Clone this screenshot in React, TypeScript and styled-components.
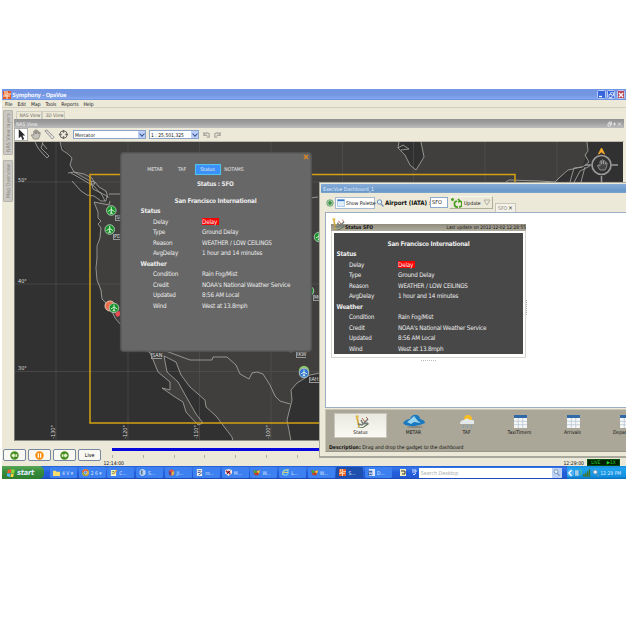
import React from "react";
import styled, { createGlobalStyle, css } from "styled-components";

const Global = createGlobalStyle`
  *{box-sizing:border-box}
  body{margin:0;background:#fff;overflow:hidden}
`;
const Desktop = styled.main`
  width:624px;height:390px;margin:89px 0 0 2px;position:relative;overflow:hidden;
  display:grid;grid-template-columns:624px;grid-template-rows:11px 8px 333px 25px 13px;background:#ece9d8;
  font-family:"DejaVu Sans Condensed","DejaVu Sans",sans-serif;font-size:5.3px;line-height:8px;color:#111;white-space:nowrap;
`;
const TitleBar = styled.header`
  display:flex;align-items:center;padding:0 1px 0 1px;gap:1.2px;
  background:linear-gradient(#7197e8,#7595df 55%,#83a8f2 90%,#5a7fd0);color:#eef3ff;
  font:bold 5.8px/10px "DejaVu Sans Condensed","DejaVu Sans",sans-serif;letter-spacing:-.28px;
`;
const Grow = styled.span`flex:1;`;
const WinButton = styled.span<{ $close?: boolean }>`
  width:8.5px;height:9px;border:1px solid #b9caf5;border-radius:1.5px;display:grid;place-items:center;flex:none;
  background:${(p) => (p.$close ? "#bf4858" : "#3566dc")};
  svg{width:6px;height:6px}
`;
const MenuBar = styled.nav`
  display:flex;gap:4.9px;padding-left:3px;font-size:5px;line-height:8px;border-bottom:1px solid #d2cfc2;
`;
const Workspace = styled.div`display:grid;grid-template-columns:12px 610px 2px;`;
const Rail = styled.aside`padding:2px 0 0 1px;display:flex;flex-direction:column;gap:5px;`;
const RailTab = styled.div<{ $h: number }>`
  height:${(p) => p.$h}px;width:10px;border:1px solid #b6b3aa;border-radius:1px;background:#cbc9c4;
  writing-mode:vertical-rl;transform:rotate(180deg);display:flex;align-items:center;justify-content:center;line-height:8px;color:#88867d;font-size:5.3px;
`;
const MapPane = styled.section`display:grid;grid-template-rows:11px 9px 14px 299px;min-width:0;`;
const TabStrip = styled.div`display:flex;align-items:flex-end;padding-left:2px;`;
const ViewTab = styled.span<{ $w: number }>`
  width:${(p) => p.$w}px;height:8px;border:1px solid #cfccc0;border-width:1px 1px 0 1px;padding-left:2.5px;font-size:4.9px;color:#6d6b62;line-height:7px;
`;
const PaneBar = styled.div`
  display:flex;align-items:center;background:linear-gradient(#929292,#9c9c9c 40%,#bdbdbd);color:#f4f4f4;font-size:5px;padding:0 2px;
`;
const ToolRow = styled.div`display:flex;align-items:center;border-bottom:1px solid #bcb9ac;`;
const Tool = styled.span<{ $on?: boolean }>`
  width:14px;height:13px;display:grid;place-items:center;
  ${(p) => p.$on && css`background:#fff;border:1px solid #b2b2ac;`}
  svg{width:11px;height:11px}
`;
const Select = styled.div<{ $w: number }>`
  width:${(p) => p.$w}px;height:9px;border:1px solid #89a4c7;background:#fff;display:flex;justify-content:space-between;
  padding-left:1px;line-height:8px;font-size:5px;margin-left:3px;
`;
const Arrow = styled.i`
  width:7px;height:7px;background:#bccffa;display:grid;place-items:center;
  &:after{content:"";width:3px;height:3px;border:solid #3c5590;border-width:0 1px 1px 0;transform:translateY(-1px) rotate(45deg)}
`;
const Undo = styled.span`display:flex;gap:4px;margin-left:4px;svg{width:7px;height:7px}`;
const MapCanvas = styled.div`
  position:relative;overflow:hidden;background:#403f3d;border-left:1px solid #777;border-bottom:1px solid #8b8b87;margin-right:1px;
`;
const MapDrawing = styled.svg`display:block;width:608px;height:299px;`;
const MapText = styled.span<{ $x: number; $y: number; $v?: boolean; $box?: boolean }>`
  position:absolute;left:${(p) => p.$x - 15}px;top:${(p) => p.$y - 142}px;color:#ddd;font-size:5.5px;line-height:6px;
  ${(p) => p.$v && css`writing-mode:vertical-rl;transform:rotate(180deg);`}
  ${(p) => p.$box && css`border:1px solid #999;border-width:0 0 1px 1px;line-height:5px;`}
`;
const Popup = styled.section`
  position:absolute;left:119px;top:64px;width:190px;height:198px;background:#676767;border:1px solid #5e5e5e;border-radius:3px;
  box-shadow:0 0 1px 1px #555;color:#e8e8e8;padding-left:18.5px;
`;
const CloseCross = styled.span`position:absolute;right:1.5px;top:0;svg{width:6px;height:6px;display:block}`;
const PopupTabs = styled.div`display:flex;align-items:center;height:11px;margin-top:9.5px;font-size:5.1px;`;
const PopupTab = styled.span<{ $w: number; $on?: boolean }>`
  width:${(p) => p.$w}px;height:11px;line-height:9px;text-align:center;border:1px solid transparent;
  ${(p) => p.$on && css`background:#3b91f8;border-color:#50c2ec;`}
`;
const PopupHeading = styled.h2`
  margin:4px 20px 0 0;font:bold 6.3px/9px "DejaVu Sans Condensed","DejaVu Sans",sans-serif;text-align:center;height:18.5px;letter-spacing:-.25px;
`;
const Report = styled.div`font-size:6.3px;line-height:10.5px;color:#ececec;letter-spacing:-.21px;`;
const Airport = styled.h3<{ $w: number }>`
  margin:0;width:${(p) => p.$w}px;text-align:center;font-size:6.4px;line-height:9px;height:9px;letter-spacing:-.26px;
`;
const Group = styled.h4`margin:0;font-size:6.4px;line-height:10.5px;height:10.5px;`;
const Field = styled.div`display:grid;grid-template-columns:49px auto;padding-left:12.5px;height:10.5px;justify-content:start;`;
const Alert = styled.mark`
  background:#fb0000;color:#ffe9e9;display:inline-block;width:17px;height:7px;line-height:7px;vertical-align:middle;margin-top:-1px;
`;
const Playback = styled.footer`display:flex;padding:8px 0 0 1px;gap:1.6px;`;
const PlayButton = styled.button`
  width:23.4px;height:12px;padding:0;border:1px solid #7588a0;border-radius:2px;background:#f9f8f2;display:grid;place-items:center;
  font:5.3px/8px "DejaVu Sans Condensed","DejaVu Sans",sans-serif;svg{width:9px;height:9px}
`;
const Timeline = styled.div`flex:1;margin-left:9.5px;margin-top:-8px;padding-top:7px;`;
const Progress = styled.div`height:2.5px;background:#0808dd;`;
const Ticks = styled.div`
  height:3px;margin-top:4px;background:repeating-linear-gradient(90deg,#b0aea5 0 1px,transparent 1px 30.8px);
`;
const TimeRow = styled.div`display:flex;justify-content:flex-end;font-size:5.1px;line-height:6px;margin:1.5px 6px 0 -9px;align-items:center;gap:3px;`;
const LiveBadge = styled.span`
  width:33px;height:7px;background:#021f05;border:1px solid #064d0a;color:#1ed92c;font-size:4.8px;line-height:5px;display:flex;justify-content:space-around;
`;
const Dashboard = styled.section`
  position:absolute;left:317px;top:93px;width:310px;height:276px;background:#ece9d8;border:1px solid #aaa99e;border-width:1px 0 2px 1px;
  display:grid;grid-template-columns:308px;grid-template-rows:10px 19px 196px 44px;padding-left:1px;
`;
const DashTitle = styled.header`
  background:linear-gradient(#88acd7,#6698ca 80%,#81a6cb);color:#e5efff;line-height:10px;padding-left:2px;font-size:5.1px;margin-top:1px;
`;
const DashTools = styled.div`
  display:flex;align-items:center;padding-left:5px;gap:1px;font-size:5.1px;
  >svg{width:8px;height:8px;flex:none}
`;
const DashButton = styled.span<{ $w: number; $plain?: boolean }>`
  width:${(p) => p.$w}px;flex:none;height:12px;border:1px solid #a8bad1;background:#fff;display:flex;align-items:center;gap:1.5px;padding-left:.5px;
  svg{width:8px;height:8px;flex:none}
  ${(p) => p.$plain && css`background:#ece9d8;border-color:#f7f6ee #b1ae9f #b1ae9f #f2f1e8;height:13px;gap:2.5px;svg:first-child{width:11px;height:10px}`}
`;
const AirportLabel = styled.label`font-size:6.2px;font-weight:bold;width:44px;flex:none;letter-spacing:-.05px;`;
const AirportInput = styled.span`width:18px;flex:none;height:11px;border:1px solid #8aa9cd;background:#fff;line-height:9px;padding-left:1px;font-size:5.5px;`;
const SmallTab = styled.span`
  align-self:flex-end;width:21px;flex:none;height:9px;border:1px solid #c8c5b9;border-bottom:0;display:flex;justify-content:space-between;padding:0 2px;color:#89877e;background:#f4f2e9;margin-left:1px;
  b{color:#333;font-size:6.5px;font-weight:400}
`;
const Board = styled.div`background:#fff;border:1px solid #9caec2;border-right:0;margin-left:4px;padding:6px 0 0 5px;`;
const GadgetHead = styled.div`
  width:195px;height:12px;display:flex;align-items:flex-end;background:linear-gradient(#fff 5px,#8f8b7d 5px,#b0ac9d);
  font-size:4.8px;line-height:7px;svg{width:14px;height:14px;flex:none}b{font-size:5px}
`;
const Gadget = styled.div`width:195px;height:127px;border:1px solid #d5d4cd;border-top:0;padding:2px;position:relative;`;
const SideGrip = styled.span`position:absolute;right:-2px;top:69px;height:15px;border-right:1px dotted #aaa;`;
const GadgetBody = styled.div`background:#484848;height:121px;padding:7px 0 0 2.5px;`;
const Handle = styled.div`width:15px;height:2px;margin:1px 0 0 90px;border-bottom:1px dotted #bbb;`;
const Palette = styled.div`
  background:#aaa798;border:1px solid #c9c6b8;border-bottom-color:#999689;margin-left:4px;margin-top:1px;padding:3px 0 0 8px;overflow:hidden;
`;
const GadgetList = styled.div`display:flex;height:25px;`;
const GadgetItem = styled.div<{ $on?: boolean }>`
  width:53px;flex:none;height:25px;display:flex;flex-direction:column;align-items:center;line-height:7px;padding-top:1px;font-size:5px;
  ${(p) => p.$on && css`background:linear-gradient(#e9e8e1,#fbfaf2);border:1px solid #c9c7bd;padding-top:0;`}
  svg{width:22px;height:15px}
`;
const Description = styled.p`margin:6px 0 0 -5px;font-size:5.15px;line-height:7px;`;
const Taskbar = styled.footer`
  display:flex;align-items:center;background:linear-gradient(#225bd2,#3778ea 15%,#245edb 50%,#245bd5 85%,#1c48b2);color:#dfe9ff;
`;
const Start = styled.div`
  width:42px;flex:none;height:13px;border-radius:0 5px 5px 0;background:linear-gradient(#59a65a,#378e3b 40%,#2f7c31);display:flex;align-items:center;gap:2px;padding-left:5px;margin-right:6px;
  font:italic bold 7.4px/12px "DejaVu Sans Condensed","DejaVu Sans",sans-serif;letter-spacing:-.2px;svg{width:8px;height:8px}
`;
const Task = styled.div<{ $on?: boolean }>`
  width:27px;height:11px;margin-right:1.65px;border-radius:1.5px;background:${(p) => (p.$on ? "#1d4fae" : "#3d80ef")};
  display:flex;align-items:center;gap:2px;padding-left:3px;font-size:5px;flex:none;overflow:hidden;svg{width:7px;height:7px;flex:none}
`;
const Language = styled.span`width:25px;flex:none;display:flex;gap:5px;padding-left:6px;svg{width:6px;height:7px}`;
const Search = styled.span`
  width:143px;flex:none;height:10px;background:#fff;color:#aaa;padding-left:2px;line-height:10px;font-size:5.3px;display:flex;justify-content:space-between;
  i{width:10px;background:#bbd0f2;display:grid;place-items:center}svg{width:7px;height:7px}
`;
const Tray = styled.div`
  margin-left:5px;width:59px;height:13px;flex:none;background:linear-gradient(#1a8ce0,#20a3ee 20%,#1290df 80%,#0d6fc0);display:flex;align-items:center;gap:1px;font-size:5px;
  svg{width:7.4px;height:8px;flex:none}
`;

const Cross = ({ c }: { c: string }) => (
  <svg viewBox="0 0 6 6"><path d="M1 1l4 4M5 1L1 5" stroke={c} strokeWidth="1.3" /></svg>
);
const Lens = () => (
  <svg viewBox="0 0 8 8" fill="#e7f2fc" stroke="#7091b3"><circle cx="3.5" cy="3" r="2.2" /><path d="M5 5l2.5 2.5" strokeWidth="1.3" /></svg>
);
const Hand = ({ c = "#77746d", f = "#c4c1b8" }) => (
  <svg viewBox="0 0 12 12"><path d="M4 11L1.5 7 2 5.8 4 7V2.5l1-.7.7.7v2.7-4l1-.5.8.7v3.8-3l1-.5.8.7v3l1-2 .9.6-.7 4L9 11Z" fill={f} stroke={c} strokeWidth=".7" /></svg>
);
const Table = () => (
  <svg viewBox="0 0 22 15"><path fill="#f4f6f8" d="M5 1h13v13H5z" /><path fill="#326aa8" d="M5 1h13v3H5z" /><path d="M5 7.3h13M5 10.7h13M9.3 4v10M13.7 4v10" stroke="#aab8c7" strokeWidth=".6" /></svg>
);
const Dish = ({ wide = false }: { wide?: boolean }) => (
  <svg viewBox={wide ? "0 0 22 15" : "4 0 15 15"} fill="none"><path d="M6 14l7-1 5-4 1 1-6 4Z" fill="#526c50" /><path d="M7 3l2 10" stroke="#d3a738" strokeWidth="1.7" /><path d="M5 2l3-1 1 2-2 2Z" fill="#e4bd52" /><path d="M8 10l4 1 6-6M11 6l2 4 5-1" stroke="#737d7b" strokeWidth="1.5" /><path d="M16 3l2 2M12 4l3 4" stroke="#b66242" /></svg>
);
const Play = ({ kind }: { kind: string }) => (
  <svg viewBox="0 0 10 10"><circle cx="5" cy="5" r="4.7" fill={kind === "pause" ? "#f78d0c" : "#488d22"} />
    {kind === "pause" ? <path d="M3.7 2.5v5M6.3 2.5v5" stroke="#fff" strokeWidth="1.4" /> :
      <g transform={kind === "back" ? "rotate(180 5 5)" : undefined}><path d="M2 3.5h4V2.2L8.5 5 6 7.8V6.5H2Z" fill="#e7f6cf" /><path d="M4 3v4" stroke="#488d22" strokeWidth=".6" /></g>}
  </svg>
);
const Pin = ({ x, y, c = "#159328" }: { x: number; y: number; c?: string }) => (
  <g transform={`translate(${x} ${y})`}><circle r="4.8" fill={c} stroke="#bac3ba" strokeWidth=".9" /><path d="M0-3.5v7M-3.2 1L0-1l3.2 2M-1.5 3L0 2l1.5 1" stroke="#e4f4e5" strokeWidth=".9" fill="none" /></g>
);
const TaskIcon = ({ kind }: { kind: number }) => {
  const shapes = [
    <path fill="#f7dd70" d="M0 2h3l1 1h4v5H0Z" />,
    <><circle cx="4" cy="4" r="4" fill="#dfa92e" /><path d="M0 4a4 4 0 0 1 7-2L4 4Z" fill="#df4534" /><path d="M0 4l4 4V4Z" fill="#49a64c" /><circle cx="4" cy="4" r="1.7" fill="#4585e7" stroke="#fff" strokeWidth=".6" /></>,
    <><path fill="#f4f3cf" d="M1 1h6v7H1z" /><path d="M2 3h3M2 5h3" stroke="#578e41" /><path d="M4 6l4-5" stroke="#e39b27" strokeWidth="1.3" /></>,
    <><path fill="#b9d1ed" stroke="#e5eff9" strokeWidth=".6" d="M4 0l3 2v4L4 8 1 6V2Z" /><path d="M4 1v6L2 5V2Z" fill="#55769a" /></>,
    <><path fill="#d2554e" d="M4 0l3 2v4L4 8 1 6V2Z" /><path fill="#69398a" d="M1 2l3 2v4L1 6Z" /><path fill="#e0b148" d="M4 4l3-2v4L4 8Z" /></>,
    <><path fill="#eee" d="M1 0h6v8H1z" /><path d="M2 2h4M2 4h3M3 7l4-3" stroke="#375487" /></>,
    <><path fill="#e9e0e0" d="M0 1l4-1 4 1v4L4 8 0 5Z" /><path d="M1 2l2 2 1-1 2 3" stroke="#bd243c" strokeWidth="1.6" fill="none" /><path d="M2 6l4-4" stroke="#222" /></>,
    <><path fill="#c93b21" d="M0 2h8L6 7H2Z" /><path fill="#3cad44" d="M1 1l3 1v3L1 4Z" /><path fill="#f0cb42" d="M4 3l4-2-1 4Z" /></>,
    <><circle cx="4" cy="4" r="3" fill="none" stroke="#65c5f4" strokeWidth="1.7" /><path d="M2 4h5M0 7C1 2 5 0 8 1" stroke="#efd66e" fill="none" /></>,
    <><path fill="#e75d24" d="M0 0h8v8H0z" /><path d="M2 0v4h2v4M4 0v3h4M0 5h7" stroke="#fbe2bd" strokeWidth="1" fill="none" /></>,
    <><path fill="#dde9fb" d="M1 0h7v8H1z" /><path fill="#315eaa" d="M0 2h5v5H0z" /><path d="M1 3l1 3 1-2 1 2 1-3" stroke="#fff" strokeWidth=".7" fill="none" /></>,
  ];
  return <svg viewBox="0 0 8 8">{shapes[kind]}</svg>;
};
const groups: [string, [string, string][]][] = [
  ["Status", [["Delay", "Delay"], ["Type", "Ground Delay"], ["Reason", "WEATHER / LOW CEILINGS"], ["AvgDelay", "1 hour and 14 minutes"]]],
  ["Weather", [["Condition", "Rain Fog/Mist"], ["Credit", "NOAA's National Weather Service"], ["Updated", "8:56 AM Local"], ["Wind", "West at 13.8mph"]]],
];
const StatusReport = ({ width }: { width: number }) => (
  <Report><Airport $w={width}>San Francisco International</Airport>
    {groups.map(([name, rows]) => <React.Fragment key={name}><Group>{name}</Group>
      {rows.map(([label, value]) => <Field key={label}><span>{label}</span><span>{label === "Delay" ? <Alert>{value}</Alert> : value}</span></Field>)}
    </React.Fragment>)}
  </Report>
);
const tasks: [number, string, boolean?][] = [[0, "4 V  ▾"], [1, "2 6  ▾"], [2, "C..."], [3, "S..."], [4, "JI..."], [5, "ro..."], [6, "M..."], [7, "W..."], [8, "L..."], [7, "W..."], [9, "S...", true], [10, "D..."]];

const MapArt = () => (
  <MapDrawing viewBox="15 142 608 299">
    <g fill="#313131">
      <path d="M15 142H60L66 152 72 158 70 166 76 173 90 181 107 194 109 202 94 202 98 212 100 222 99 240 97 258 97 280 102 299 115 318 121 325 148 349 158 372 170 382 170 390 162 388 175 397 183 402 186 412 198 425 203 423 196 414 188 400 178 382 167 372 164 356 176 362 181 375 190 387 205 400 206 407 216 416 232 437 233 441H15Z" />
      <path d="M291 441L287 420 292 400 291 390 297 383 310 375 330 371V441ZM399 142l-1 6 7 7 5 10 6 5 8-13-3-15ZM587 142v13l-5 12-14 3-12 12H623V142Z" />
    </g>
    <path d="M56 142V441M128 142V441M199.5 142V441M271 142V441M342.5 142V441M413.5 142V441M485 142V441M557 142V441M15 182H623M15 284H623M15 371.5H623" stroke="#505050" strokeWidth=".7" />
    <path fill="none" stroke="#aaa9a6" strokeWidth=".8" d="M35 142l3 6 5 6 4 4 2-2-8-8 2-6M42 143l5 6M60 142l2 8 6 4 4 4-2 7 4 7 7 4 9 5 5 1 4 5 7 4 2 7M68 173l6-1 10 2 8 4 3 6-5 0-10-6-9-5M72 181l9 10 6 4 7 1 7 5 5 0 1-5-8-4-5-6-4-2M91 181l2 8 8 4 4 8M94 202l15 3 1-4M94 202l4 10 0 6 3 3-3 3 3 4-1 10-3 8 0 12-1 10 1 12 4 10 1 9 8 8 5 11 6 7M109 194h14M121 325l27 24 4 8 6 15 12 10 0 8-8-2 13 9 8 5 3 10 12 13 5-2-7-9-8-14-10-18-11-10-3-16 12 6 5 13 9 12 15 13 1 7 10 9 16 21 1 4M163 350l27 10h22l1-3h14l9 8 4 9 9 5 3-6 5-1 6 2 7 11 5 11 5 5 10 3M291 441l-4-21 5-20-1-10 6-7 13-8 20-4M399 142l-1 6 7 7 5 10 6 5 8-13-3-15M398 148l5-3 6 4-8 1M310 198l8-1M587 142l1 9-3 4 4 7-5 4-2 1-14 3-8 7-5 5-15-1-31-1-6 4M590 166l-10 5-9 17M582 167l-8 1-4 14M585 167l-4 15" />
    <rect x="90" y="174.5" width="425" height="248.5" fill="none" stroke="#d4a013" strokeWidth="1.5" />
    <Pin x={111.3} y={210.5} /><Pin x={109.7} y={229.5} /><circle cx="110" cy="306" r="5" fill="#eb6e4c" stroke="#e7cab4" /><Pin x={114} y={308} />
    <path d="M117 312l3-1 1 4-4 2-2-3Z" fill="#ed4a52" /><Pin x={149} y={347} /><Pin x={319} y={237} /><Pin x={309} y={291} /><Pin x={291} y={347} /><circle cx="304" cy="371" r="5.2" fill="#8ac76b" /><Pin x={304} y={373} c="#3475d3" />
    <g fill="none" stroke="#999"><circle cx="601.5" cy="165" r="9.5" strokeWidth="1.7" /><path d="M612 165h6M601.5 176v6M585 165h6" strokeWidth="1.5" /></g><path d="M598.5 154l3-6 3 6-3-2Z" fill="#f5aa2b" stroke="#f5aa2b" />
    <g transform="translate(596 159)"><path d="M4 11L1.5 7 2 5.8 4 7V2.5l1-.7.7.7v2.7-4l1-.5.8.7v3.8-3l1-.5.8.7v3l1-2 .9.6-.7 4L9 11Z" fill="#444" stroke="#aaa" strokeWidth=".7" /></g>
  </MapDrawing>
);

export default function App() {
  return <><Global /><Desktop>
    <TitleBar><svg width="8" height="8" viewBox="0 0 8 8"><path fill="#e85b27" d="M0 0h8v8H0z" /><path d="M2 0v4h2v4M4 0v3h4M0 5h7" stroke="#fff1d6" fill="none" /></svg>Symphony - OpsVue<Grow />
      <WinButton><svg viewBox="0 0 6 6"><path d="M1 4.5h3" stroke="#fff" strokeWidth="1.3" /></svg></WinButton>
      <WinButton><svg viewBox="0 0 6 6" fill="none" stroke="#fff" strokeWidth=".7"><path d="M1 2.5h3v3H1zM2.5 2V.7h3v3H4" /></svg></WinButton>
      <WinButton $close><Cross c="#fff" /></WinButton></TitleBar>
    <MenuBar>{["File", "Edit", "Map", "Tools", "Reports", "Help"].map((x) => <span key={x}>{x}</span>)}</MenuBar>
    <Workspace>
      <Rail><RailTab $h={45}>NAS View layers</RailTab><RailTab $h={42}>Map Overview</RailTab></Rail>
      <MapPane>
        <TabStrip><ViewTab $w={26}>NAS View</ViewTab><ViewTab $w={23}>3D View</ViewTab></TabStrip>
        <PaneBar>NAS View<Grow /><svg width="15" height="6" viewBox="0 0 15 6" fill="none" stroke="#eee" strokeWidth=".8"><path d="M1 2.5h2.5V5H1zM2 2V1h2.5v3M6 3h3M7.5 1.5v3M11 1.5l3 3M14 1.5l-3 3" /></svg></PaneBar>
        <ToolRow>
          <Tool $on><svg viewBox="0 0 12 12"><path d="M3 0v10l2.5-2L7 12l2-1-2-4h3Z" fill="#292929" /></svg></Tool>
          <Tool><Hand /></Tool>
          <Tool><svg viewBox="0 0 12 12"><path d="M1 2l2-1 8 8-2 2Z" fill="#e8e6e1" stroke="#777" strokeWidth=".8" /><path d="M3 3l1-1M5 5l1-1M7 7l1-1" stroke="#777" strokeWidth=".6" /></svg></Tool>
          <Tool><svg viewBox="0 0 12 12" fill="none" stroke="#65635e"><circle cx="6" cy="6" r="4" /><path d="M6 1v3M6 8v3M1 6h3M8 6h3" strokeWidth="1.6" /></svg></Tool>
          <Select $w={73}>Mercator<Arrow /></Select><Select $w={50}>1 : 25,501,325<Arrow /></Select>
          <Undo><svg viewBox="0 0 8 8" fill="none" stroke="#aaa79f"><path d="M1 1v4h4M1 4l3-2 3 1v4H4" strokeWidth="1.4" /></svg><svg viewBox="0 0 8 8" fill="none" stroke="#aaa79f"><path d="M7 1v4H3M7 4L4 2 1 3v4h3" strokeWidth="1.4" /></svg></Undo>
        </ToolRow>
        <MapCanvas><MapArt />
          <MapText $x={18} $y={177}>50°</MapText><MapText $x={18} $y={278}>40°</MapText><MapText $x={18} $y={365}>30°</MapText>
          {[50, 122, 193, 265].map((x, i) => <MapText key={x} $x={x} $y={425} $v>-{130 - i * 10}°</MapText>)}
          <MapText $x={115} $y={215} $box>SE</MapText><MapText $x={113} $y={234} $box>PD</MapText><MapText $x={151} $y={353} $box>SAN</MapText><MapText $x={296} $y={352} $box>IKW</MapText><MapText $x={309} $y={377} $box>IAH</MapText><MapText $x={313} $y={295} $box>MC</MapText>
        </MapCanvas>
      </MapPane>
    </Workspace>
    <Playback><PlayButton><Play kind="back" /></PlayButton><PlayButton><Play kind="pause" /></PlayButton><PlayButton><Play kind="next" /></PlayButton><PlayButton>Live</PlayButton>
      <Timeline><Progress /><Ticks /><TimeRow><span>12:14:00</span><Grow /><span>12:29:00</span><LiveBadge><span>LIVE</span><span>▶1X</span></LiveBadge></TimeRow></Timeline></Playback>
    <Taskbar><Start><svg viewBox="0 0 8 8"><path fill="#f35a2a" d="M1 1l3-1v4L0 4Z" /><path fill="#8dd43d" d="M4.5 0L8 1 7 5 4 4Z" /><path fill="#5bb6fa" d="M0 4.5l3.5 0L3 8 0 7Z" /><path fill="#ffd13c" d="M4 4.5l3 1L6 8H3.5Z" /></svg>start</Start>
      {tasks.map(([kind, text, on], i) => <Task key={i} $on={on}><TaskIcon kind={kind} />{text}</Task>)}
      <Language><svg viewBox="0 0 6 7"><path fill="#f4efc1" d="M0 0h6v7H0z" /><path d="M1 2h4v3H2" fill="none" stroke="#333" /></svg><svg viewBox="0 0 6 7" fill="none" stroke="#d6e5ff"><path d="M1 1h4v2H1M2 5l1 1 2-2" /></svg></Language>
      <Search>Search Desktop<i><Lens /></i></Search>
      <Tray><svg viewBox="0 0 8 8"><circle cx="4" cy="4" r="4" fill="#50aef5" /><path d="M5 1L2 4l3 3" stroke="#fff" fill="none" strokeWidth="1.3" /></svg><svg viewBox="0 0 8 8"><path d="M0 1h4v6H0z" fill="#a5cae6" /><path d="M5 0l3 3-3 3" stroke="#78d750" fill="none" /></svg><svg viewBox="0 0 8 8"><path d="M1 5v3M3 4v4M5 2v6M7 0v8" stroke="#447324" strokeWidth="1.5" /></svg><Lens /><span>12:29 PM</span></Tray>
    </Taskbar>
    <Popup><CloseCross><Cross c="#de8724" /></CloseCross><PopupTabs><PopupTab $w={29}>METAR</PopupTab><PopupTab $w={25}>TAF</PopupTab><PopupTab $w={26} $on>Status</PopupTab><PopupTab $w={27}>NOTAMS</PopupTab></PopupTabs>
      <PopupHeading>Status : SFO</PopupHeading><StatusReport width={150} /></Popup>
    <Dashboard><DashTitle>ExecVue Dashboard_1</DashTitle>
      <DashTools><svg viewBox="0 0 8 8"><circle cx="4" cy="4" r="3.3" fill="#9ecb9e" stroke="#659b6d" strokeWidth=".7" /><path d="M4 2v4M2 4h4" stroke="#287f35" strokeWidth="1.2" /></svg>
        <DashButton $w={40}><svg viewBox="4 0 15 15"><path fill="#e1edf9" stroke="#7baae0" d="M5 1h13v13H5z" /><path fill="#3779c6" d="M5 1h13v3H5z" /></svg>Show Palette</DashButton><Lens /><AirportLabel>Airport (IATA) :</AirportLabel><AirportInput>SFO</AirportInput>
        <DashButton $w={44} $plain><svg viewBox="0 0 11 10" fill="none" stroke="#479d20" strokeWidth="1.6"><circle cx="1.5" cy="1.5" r=".7" /><path d="M6 3a3 3 0 0 0 1 6M8 3a3 3 0 0 1 0 6M7 1l2 2-2 1" /></svg>Update<svg viewBox="0 0 8 8" fill="none" stroke="#b3b1a8"><path d="M1 1l3 5 3-5Z" /></svg></DashButton><SmallTab>SFO <b>×</b></SmallTab>
      </DashTools>
      <Board><GadgetHead><Dish /><b>Status SFO</b><Grow />Last update on 2012-12-02 12:28:55</GadgetHead><Gadget><GadgetBody><StatusReport width={184} /></GadgetBody><SideGrip /></Gadget><Handle /></Board>
      <Palette><GadgetList><GadgetItem $on><Dish wide />Status</GadgetItem>
        <GadgetItem><svg viewBox="0 0 22 15"><ellipse cx="12" cy="13" rx="8" ry="1" fill="#8a897f" /><path d="M0 9q3-4 7-4 2-5 7-4 3 1 3 4 5 1 5 4-9 5-20 2Z" fill="#1978be" /><path d="M4 8q5-4 7-6l4 5 3 2-7-1-3 2Z" fill="#9bd5ed" /></svg>METAR</GadgetItem>
        <GadgetItem><svg viewBox="0 0 22 15"><circle cx="12" cy="5" r="4" fill="#f7bd24" /><path d="M4 10q0-4 4-4 3-3 6 0 5-1 4 4Z" fill="#e3e8e9" /><path d="M8 11l-1 3M12 11l-1 3M16 11l-1 3" stroke="#77a1bd" /></svg>TAF</GadgetItem>
        {["TaxiTimers", "Arrivals", "Departures"].map((x) => <GadgetItem key={x}><Table />{x}</GadgetItem>)}</GadgetList>
        <Description><b>Description:</b> Drag and drop the gadget to the dashboard</Description></Palette>
    </Dashboard>
  </Desktop></>;
}
